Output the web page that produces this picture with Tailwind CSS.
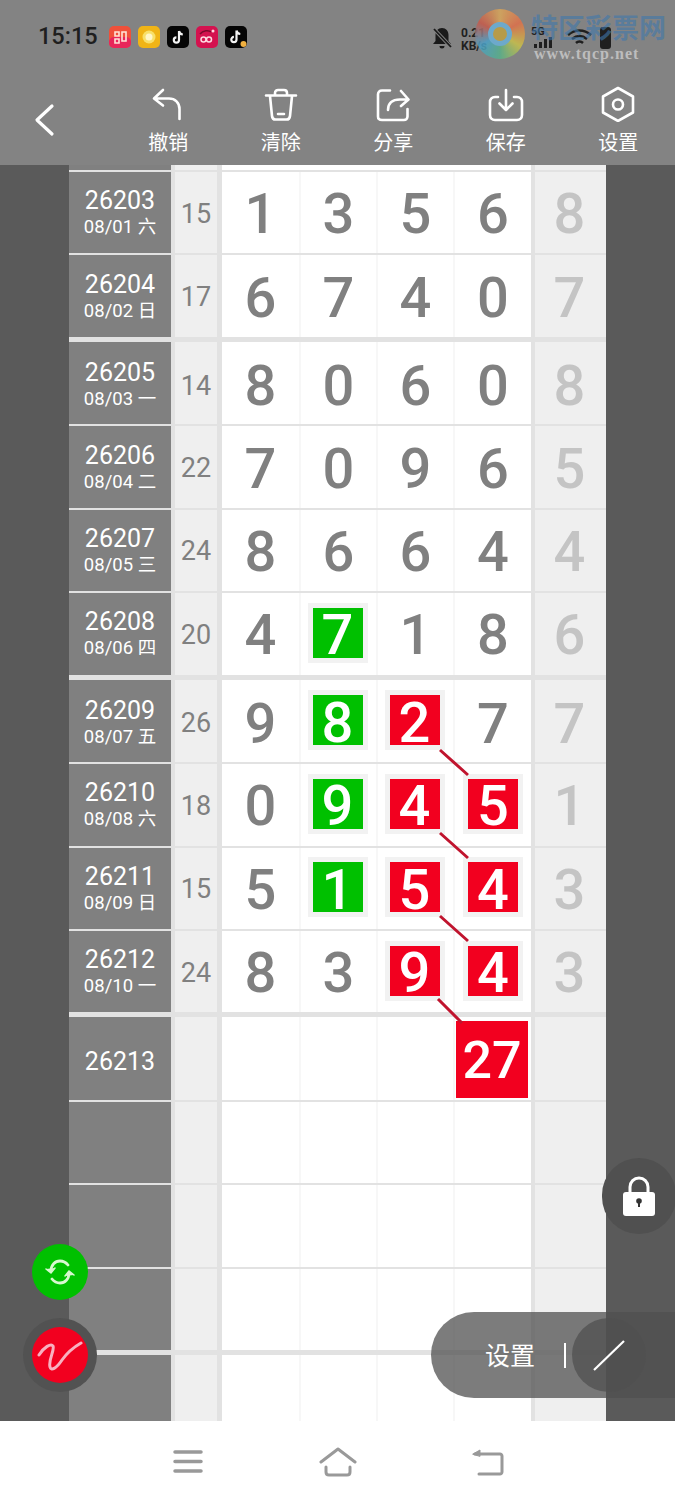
<!DOCTYPE html>
<html lang="zh">
<head>
<meta charset="utf-8">
<script src="https://cdn.jsdelivr.net/npm/@tailwindcss/browser@4"></script>
</head>
<body class="font-['Roboto','Noto_Sans_CJK_SC',sans-serif]">
<div class="relative w-[675px] h-[1500px] overflow-hidden bg-white flex flex-col">

<!-- Header -->
<header class="h-[165px] bg-[#838383] flex flex-col shrink-0 relative">
  <div class="h-[75px] pl-[38px] flex items-center gap-[10px] pb-[1px]">
    <span class="text-[23.500px] font-medium text-[#1f1f1f] w-[61px] leading-none">15:15</span>
    <div class="flex gap-[7px]">
      <svg class="w-[22px] h-[22px]" viewBox="0 0 22 22"><rect width="22" height="22" rx="5" fill="#f0503a"/><rect y="11" width="22" height="11" rx="5" fill="#e8265a"/><path d="M6 6h4v4H6zM13 6h4v9h-4zM6 13h4v4H6z" fill="none" stroke="#ffe3d6" stroke-width="1.6"/></svg>
      <svg class="w-[22px] h-[22px]" viewBox="0 0 22 22"><rect width="22" height="22" rx="5" fill="#f0b416"/><circle cx="11" cy="11" r="6.5" fill="#f8e06a"/><circle cx="11" cy="11" r="3.5" fill="#fff6c8"/></svg>
      <svg class="w-[22px] h-[22px]" viewBox="0 0 22 22"><rect width="22" height="22" rx="5" fill="#050505"/><path d="M12 5v9a2.6 2.6 0 1 1-2.6-2.6M12 5c.3 2 1.7 3.3 3.8 3.5" fill="none" stroke="#f4f4f4" stroke-width="2.2"/></svg>
      <svg class="w-[22px] h-[22px]" viewBox="0 0 22 22"><rect width="22" height="22" rx="5" fill="#d4124f"/><circle cx="7.5" cy="13.5" r="2.5" fill="none" stroke="#ffd8e0" stroke-width="1.5"/><circle cx="13" cy="13.5" r="2.5" fill="none" stroke="#ffd8e0" stroke-width="1.5"/><path d="M4 8c3-4 9-4 11-2" fill="none" stroke="#7a0a2c" stroke-width="1.5"/><circle cx="17" cy="5" r="1.5" fill="#ffd8e0"/></svg>
      <svg class="w-[22px] h-[22px]" viewBox="0 0 22 22"><rect width="22" height="22" rx="5" fill="#050505"/><path d="M11.5 4.5v9a2.6 2.6 0 1 1-2.6-2.6M11.5 4.5c.3 2 1.7 3.3 3.8 3.5" fill="none" stroke="#f4f4f4" stroke-width="2.2"/><circle cx="18.5" cy="18" r="3" fill="#f0b040"/></svg>
    </div>
  </div>
  <!-- Status right + watermark -->
  <svg class="absolute left-[431px] top-[26px] w-[22px] h-[24px]" viewBox="0 0 22 24"><path d="M11 2c4 0 6.500 3 6.500 7v6l2.500 3H2l2.500-3V9C4.500 5 7 2 11 2zM8.500 20h5a2.500 2.500 0 0 1-5 0z" fill="#1a1a1a"/><path d="M2 2l18 19" stroke="#838383" stroke-width="3.500"/><path d="M3 3l17 18" stroke="#1a1a1a" stroke-width="1.800"/></svg>
  <div class="absolute left-[461px] top-[27px] text-[12px] leading-[13px] font-bold text-[#1f1f1f]">0.21<br>KB/s</div>
  <div class="absolute left-[531px] top-[27px] w-[15px] text-[11px] leading-[10px] font-bold text-[#1f1f1f]">5G</div>
  <div class="absolute left-[534px] top-[37px] flex items-end gap-[2px] h-[11px]">
    <div class="w-[3px] h-[4px] bg-[#1f1f1f]"></div><div class="w-[3px] h-[6px] bg-[#1f1f1f]"></div><div class="w-[3px] h-[9px] bg-[#1f1f1f]"></div><div class="w-[3px] h-[11px] bg-[#1f1f1f]"></div>
  </div>
  <svg class="absolute left-[566px] top-[28px] w-[27px] h-[20px]" viewBox="0 0 27 20" fill="none" stroke="#1f1f1f" stroke-width="2.500"><path d="M2 7c7-6 16-6 23 0M6 11c5-4 10-4 15 0M10 15c2-2 5-2 7 0"/></svg>
  <div class="absolute left-[600px] top-[27px] w-[11px] h-[22px] rounded-[3px] bg-[#1f1f1f]"></div>
  <div class="absolute left-[475px] top-[9px] w-[50px] h-[50px] rounded-full bg-[conic-gradient(#d9a85a,#e0704a,#c9c04a,#58b08a,#4aa0c8,#c85a4a,#d9a85a)] opacity-85 flex items-center justify-center">
    <div class="w-[24px] h-[24px] rounded-full border-[5px] border-[#6ab0d8] bg-[#c0a040]"></div>
  </div>
  <div class="absolute left-[531px] top-[14px] text-[27px] leading-[30px] font-bold text-[#3f78ad]/60">特区彩票网</div>
  <div class="absolute left-[534px] top-[45px] text-[16px] leading-[18px] tracking-[1px] font-bold font-['Liberation_Serif',serif] text-[#bdbdbd]">www.tqcp.net</div>

  <!-- Toolbar -->
  <div class="relative flex-1 flex text-white text-[20px] leading-none">
    <svg class="absolute left-[32px] top-[28px] w-[24px] h-[34px]" viewBox="0 0 24 34" fill="none" stroke="#fff" stroke-width="3.200" stroke-linecap="round" stroke-linejoin="round"><path d="M20 3L5 17l15 14"/></svg>
    <div class="ml-[112px] w-[112.500px] flex flex-col items-center pt-[13px]">
      <svg class="w-[34px] h-[34px]" viewBox="0 0 34 34" fill="none" stroke="#fff" stroke-width="2.600" stroke-linecap="round" stroke-linejoin="round"><path d="M12 2L3 10.500l9 7M3 10.500h15c6 0 10.500 4 10.500 10.500V31"/></svg>
      <span class="mt-[11px]">撤销</span>
    </div>
    <div class="w-[112.500px] flex flex-col items-center pt-[13px]">
      <svg class="w-[34px] h-[34px]" viewBox="0 0 34 34" fill="none" stroke="#fff" stroke-width="2.600" stroke-linecap="round" stroke-linejoin="round"><path d="M2 7.500h30M11 7V5c0-2 1.500-3 3-3h6c1.500 0 3 1 3 3v2M6 8l2 20c.2 2 1.500 3.500 3.500 3.500h11c2 0 3.300-1.500 3.500-3.500l2-20M14 26h6"/></svg>
      <span class="mt-[11px]">清除</span>
    </div>
    <div class="w-[112.500px] flex flex-col items-center pt-[13px]">
      <svg class="w-[34px] h-[34px]" viewBox="0 0 34 34" fill="none" stroke="#fff" stroke-width="2.600" stroke-linecap="round" stroke-linejoin="round"><path d="M14 2.500H6C3.500 2.500 2 4 2 6.500v22C2 30.500 3.500 32 6 32h22c2 0 3.500-1.500 3.500-3.500V21M12 22c0-7 4-10.500 12-10.500h8M25 3l7.500 8.500L25 18"/></svg>
      <span class="mt-[11px]">分享</span>
    </div>
    <div class="w-[112.500px] flex flex-col items-center pt-[13px]">
      <svg class="w-[36px] h-[34px]" viewBox="0 0 36 34" fill="none" stroke="#fff" stroke-width="2.600" stroke-linecap="round" stroke-linejoin="round"><path d="M10 9H7c-3 0-5 2-5 5v13c0 3 2 5 5 5h22c3 0 5-2 5-5V14c0-3-2-5-5-5h-3M18 2v20M11.500 15.500L18 22l6.500-6.500"/></svg>
      <span class="mt-[11px]">保存</span>
    </div>
    <div class="w-[112.500px] flex flex-col items-center pt-[11px]">
      <svg class="w-[34px] h-[36px]" viewBox="0 0 34 36" fill="none" stroke="#fff" stroke-width="2.600" stroke-linejoin="round"><path d="M17 2l15 8.500v16L17 35 2 26.500v-16z"/><circle cx="17" cy="18.500" r="5"/></svg>
      <span class="mt-[11px]">设置</span>
    </div>
  </div>
</header>

<!-- Table -->
<main class="relative flex-1 bg-[#5a5a5a] overflow-hidden px-[69px]">
  <div class="w-[537px] text-[#808080]">
    <!-- sliver -->
    <div class="h-[7px] border-b-2 border-[#e2e2e2] bg-[#e2e2e2] grid grid-cols-[102px_4px_42px_5px_309px_4px_71px]">
      <div class="bg-[#808080]"></div><div></div><div class="bg-[#efefef]"></div><div></div><div class="bg-white"></div><div></div><div class="bg-[#efefef]"></div>
    </div>

    <!-- Rows -->
    <div class="h-[83.400px] border-b-2 border-[#e2e2e2] bg-[#e2e2e2] grid grid-cols-[102px_4px_42px_5px_79px_77px_77px_76px_4px_71px] items-stretch [&>div]:pt-[3px]">
      <div class="bg-[#808080] text-white flex flex-col items-center justify-center"><span class="text-[25px] leading-[27px]">26203</span><span class="text-[18.500px] leading-[27px]">08/01 六</span></div><div></div>
      <div class="bg-[#efefef] flex items-center justify-center text-[27px] leading-none">15</div><div></div>
      <div class="bg-white border-r-2 border-[#f7f7f7] flex items-center justify-center text-[56px] leading-none font-medium">1</div>
      <div class="bg-white border-r-2 border-[#f7f7f7] flex items-center justify-center text-[56px] leading-none font-medium">3</div>
      <div class="bg-white border-r-2 border-[#f7f7f7] flex items-center justify-center text-[56px] leading-none font-medium">5</div>
      <div class="bg-white flex items-center justify-center text-[56px] leading-none font-medium">6</div><div></div>
      <div class="bg-[#efefef] flex items-center justify-center text-[56px] leading-none font-medium text-[#c4c4c4] pr-[2px]">8</div>
    </div>
    <div class="h-[86.400px] border-b-[5px] border-[#e2e2e2] bg-[#e2e2e2] grid grid-cols-[102px_4px_42px_5px_79px_77px_77px_76px_4px_71px] items-stretch [&>div]:pt-[3px]">
      <div class="bg-[#808080] text-white flex flex-col items-center justify-center"><span class="text-[25px] leading-[27px]">26204</span><span class="text-[18.500px] leading-[27px]">08/02 日</span></div><div></div>
      <div class="bg-[#efefef] flex items-center justify-center text-[27px] leading-none">17</div><div></div>
      <div class="bg-white border-r-2 border-[#f7f7f7] flex items-center justify-center text-[56px] leading-none font-medium">6</div>
      <div class="bg-white border-r-2 border-[#f7f7f7] flex items-center justify-center text-[56px] leading-none font-medium">7</div>
      <div class="bg-white border-r-2 border-[#f7f7f7] flex items-center justify-center text-[56px] leading-none font-medium">4</div>
      <div class="bg-white flex items-center justify-center text-[56px] leading-none font-medium">0</div><div></div>
      <div class="bg-[#efefef] flex items-center justify-center text-[56px] leading-none font-medium text-[#c4c4c4] pr-[2px]">7</div>
    </div>
    <div class="h-[84.600px] border-b-2 border-[#e2e2e2] bg-[#e2e2e2] grid grid-cols-[102px_4px_42px_5px_79px_77px_77px_76px_4px_71px] items-stretch [&>div]:pt-[6px]">
      <div class="bg-[#808080] text-white flex flex-col items-center justify-center"><span class="text-[25px] leading-[27px]">26205</span><span class="text-[18.500px] leading-[27px]">08/03 一</span></div><div></div>
      <div class="bg-[#efefef] flex items-center justify-center text-[27px] leading-none">14</div><div></div>
      <div class="bg-white border-r-2 border-[#f7f7f7] flex items-center justify-center text-[56px] leading-none font-medium">8</div>
      <div class="bg-white border-r-2 border-[#f7f7f7] flex items-center justify-center text-[56px] leading-none font-medium">0</div>
      <div class="bg-white border-r-2 border-[#f7f7f7] flex items-center justify-center text-[56px] leading-none font-medium">6</div>
      <div class="bg-white flex items-center justify-center text-[56px] leading-none font-medium">0</div><div></div>
      <div class="bg-[#efefef] flex items-center justify-center text-[56px] leading-none font-medium text-[#c4c4c4] pr-[2px]">8</div>
    </div>
    <div class="h-[83.400px] border-b-2 border-[#e2e2e2] bg-[#e2e2e2] grid grid-cols-[102px_4px_42px_5px_79px_77px_77px_76px_4px_71px] items-stretch [&>div]:pt-[3px]">
      <div class="bg-[#808080] text-white flex flex-col items-center justify-center"><span class="text-[25px] leading-[27px]">26206</span><span class="text-[18.500px] leading-[27px]">08/04 二</span></div><div></div>
      <div class="bg-[#efefef] flex items-center justify-center text-[27px] leading-none">22</div><div></div>
      <div class="bg-white border-r-2 border-[#f7f7f7] flex items-center justify-center text-[56px] leading-none font-medium">7</div>
      <div class="bg-white border-r-2 border-[#f7f7f7] flex items-center justify-center text-[56px] leading-none font-medium">0</div>
      <div class="bg-white border-r-2 border-[#f7f7f7] flex items-center justify-center text-[56px] leading-none font-medium">9</div>
      <div class="bg-white flex items-center justify-center text-[56px] leading-none font-medium">6</div><div></div>
      <div class="bg-[#efefef] flex items-center justify-center text-[56px] leading-none font-medium text-[#c4c4c4] pr-[2px]">5</div>
    </div>
    <div class="h-[83.400px] border-b-2 border-[#e2e2e2] bg-[#e2e2e2] grid grid-cols-[102px_4px_42px_5px_79px_77px_77px_76px_4px_71px] items-stretch [&>div]:pt-[3px]">
      <div class="bg-[#808080] text-white flex flex-col items-center justify-center"><span class="text-[25px] leading-[27px]">26207</span><span class="text-[18.500px] leading-[27px]">08/05 三</span></div><div></div>
      <div class="bg-[#efefef] flex items-center justify-center text-[27px] leading-none">24</div><div></div>
      <div class="bg-white border-r-2 border-[#f7f7f7] flex items-center justify-center text-[56px] leading-none font-medium">8</div>
      <div class="bg-white border-r-2 border-[#f7f7f7] flex items-center justify-center text-[56px] leading-none font-medium">6</div>
      <div class="bg-white border-r-2 border-[#f7f7f7] flex items-center justify-center text-[56px] leading-none font-medium">6</div>
      <div class="bg-white flex items-center justify-center text-[56px] leading-none font-medium">4</div><div></div>
      <div class="bg-[#efefef] flex items-center justify-center text-[56px] leading-none font-medium text-[#c4c4c4] pr-[2px]">4</div>
    </div>
    <div class="h-[86.400px] border-b-[5px] border-[#e2e2e2] bg-[#e2e2e2] grid grid-cols-[102px_4px_42px_5px_79px_77px_77px_76px_4px_71px] items-stretch [&>div]:pt-[3px]">
      <div class="bg-[#808080] text-white flex flex-col items-center justify-center"><span class="text-[25px] leading-[27px]">26208</span><span class="text-[18.500px] leading-[27px]">08/06 四</span></div><div></div>
      <div class="bg-[#efefef] flex items-center justify-center text-[27px] leading-none">20</div><div></div>
      <div class="bg-white border-r-2 border-[#f7f7f7] flex items-center justify-center text-[56px] leading-none font-medium">4</div>
      <div class="bg-white border-r-2 border-[#f7f7f7] flex items-center justify-center pr-[2px]"><div class="w-[50px] h-[50px] -mt-[5px] pt-[5px] ring-[5px] ring-[#f2f2f2] bg-[#00c000] text-white text-[56px] leading-none font-medium flex items-center justify-center">7</div></div>
      <div class="bg-white border-r-2 border-[#f7f7f7] flex items-center justify-center text-[56px] leading-none font-medium">1</div>
      <div class="bg-white flex items-center justify-center text-[56px] leading-none font-medium">8</div><div></div>
      <div class="bg-[#efefef] flex items-center justify-center text-[56px] leading-none font-medium text-[#c4c4c4] pr-[2px]">6</div>
    </div>
    <div class="h-[84.600px] border-b-2 border-[#e2e2e2] bg-[#e2e2e2] grid grid-cols-[102px_4px_42px_5px_79px_77px_77px_76px_4px_71px] items-stretch [&>div]:pt-[6px]">
      <div class="bg-[#808080] text-white flex flex-col items-center justify-center"><span class="text-[25px] leading-[27px]">26209</span><span class="text-[18.500px] leading-[27px]">08/07 五</span></div><div></div>
      <div class="bg-[#efefef] flex items-center justify-center text-[27px] leading-none">26</div><div></div>
      <div class="bg-white border-r-2 border-[#f7f7f7] flex items-center justify-center text-[56px] leading-none font-medium">9</div>
      <div class="bg-white border-r-2 border-[#f7f7f7] flex items-center justify-center pr-[2px]"><div class="w-[50px] h-[50px] -mt-[7px] pt-[5px] ring-[5px] ring-[#f2f2f2] bg-[#00c000] text-white text-[56px] leading-none font-medium flex items-center justify-center">8</div></div>
      <div class="bg-white border-r-2 border-[#f7f7f7] flex items-center justify-center pr-[2px]"><div class="w-[50px] h-[50px] -mt-[7px] pt-[5px] ring-[5px] ring-[#f2f2f2] bg-[#f2001f] text-white text-[56px] leading-none font-medium flex items-center justify-center">2</div></div>
      <div class="bg-white flex items-center justify-center text-[56px] leading-none font-medium">7</div><div></div>
      <div class="bg-[#efefef] flex items-center justify-center text-[56px] leading-none font-medium text-[#c4c4c4] pr-[2px]">7</div>
    </div>
    <div class="h-[83.400px] border-b-2 border-[#e2e2e2] bg-[#e2e2e2] grid grid-cols-[102px_4px_42px_5px_79px_77px_77px_76px_4px_71px] items-stretch [&>div]:pt-[3px]">
      <div class="bg-[#808080] text-white flex flex-col items-center justify-center"><span class="text-[25px] leading-[27px]">26210</span><span class="text-[18.500px] leading-[27px]">08/08 六</span></div><div></div>
      <div class="bg-[#efefef] flex items-center justify-center text-[27px] leading-none">18</div><div></div>
      <div class="bg-white border-r-2 border-[#f7f7f7] flex items-center justify-center text-[56px] leading-none font-medium">0</div>
      <div class="bg-white border-r-2 border-[#f7f7f7] flex items-center justify-center pr-[2px]"><div class="w-[50px] h-[50px] -mt-[5px] pt-[5px] ring-[5px] ring-[#f2f2f2] bg-[#00c000] text-white text-[56px] leading-none font-medium flex items-center justify-center">9</div></div>
      <div class="bg-white border-r-2 border-[#f7f7f7] flex items-center justify-center pr-[2px]"><div class="w-[50px] h-[50px] -mt-[5px] pt-[5px] ring-[5px] ring-[#f2f2f2] bg-[#f2001f] text-white text-[56px] leading-none font-medium flex items-center justify-center">4</div></div>
      <div class="bg-white flex items-center justify-center"><div class="w-[50px] h-[50px] -mt-[5px] pt-[5px] ring-[5px] ring-[#f2f2f2] bg-[#f2001f] text-white text-[56px] leading-none font-medium flex items-center justify-center">5</div></div><div></div>
      <div class="bg-[#efefef] flex items-center justify-center text-[56px] leading-none font-medium text-[#c4c4c4] pr-[2px]">1</div>
    </div>
    <div class="h-[83.400px] border-b-2 border-[#e2e2e2] bg-[#e2e2e2] grid grid-cols-[102px_4px_42px_5px_79px_77px_77px_76px_4px_71px] items-stretch [&>div]:pt-[3px]">
      <div class="bg-[#808080] text-white flex flex-col items-center justify-center"><span class="text-[25px] leading-[27px]">26211</span><span class="text-[18.500px] leading-[27px]">08/09 日</span></div><div></div>
      <div class="bg-[#efefef] flex items-center justify-center text-[27px] leading-none">15</div><div></div>
      <div class="bg-white border-r-2 border-[#f7f7f7] flex items-center justify-center text-[56px] leading-none font-medium">5</div>
      <div class="bg-white border-r-2 border-[#f7f7f7] flex items-center justify-center pr-[2px]"><div class="w-[50px] h-[50px] -mt-[5px] pt-[5px] ring-[5px] ring-[#f2f2f2] bg-[#00c000] text-white text-[56px] leading-none font-medium flex items-center justify-center">1</div></div>
      <div class="bg-white border-r-2 border-[#f7f7f7] flex items-center justify-center pr-[2px]"><div class="w-[50px] h-[50px] -mt-[5px] pt-[5px] ring-[5px] ring-[#f2f2f2] bg-[#f2001f] text-white text-[56px] leading-none font-medium flex items-center justify-center">5</div></div>
      <div class="bg-white flex items-center justify-center"><div class="w-[50px] h-[50px] -mt-[5px] pt-[5px] ring-[5px] ring-[#f2f2f2] bg-[#f2001f] text-white text-[56px] leading-none font-medium flex items-center justify-center">4</div></div><div></div>
      <div class="bg-[#efefef] flex items-center justify-center text-[56px] leading-none font-medium text-[#c4c4c4] pr-[2px]">3</div>
    </div>
    <div class="h-[86.400px] border-b-[5px] border-[#e2e2e2] bg-[#e2e2e2] grid grid-cols-[102px_4px_42px_5px_79px_77px_77px_76px_4px_71px] items-stretch [&>div]:pt-[3px]">
      <div class="bg-[#808080] text-white flex flex-col items-center justify-center"><span class="text-[25px] leading-[27px]">26212</span><span class="text-[18.500px] leading-[27px]">08/10 一</span></div><div></div>
      <div class="bg-[#efefef] flex items-center justify-center text-[27px] leading-none">24</div><div></div>
      <div class="bg-white border-r-2 border-[#f7f7f7] flex items-center justify-center text-[56px] leading-none font-medium">8</div>
      <div class="bg-white border-r-2 border-[#f7f7f7] flex items-center justify-center text-[56px] leading-none font-medium">3</div>
      <div class="bg-white border-r-2 border-[#f7f7f7] flex items-center justify-center pr-[2px]"><div class="w-[50px] h-[50px] -mt-[5px] pt-[5px] ring-[5px] ring-[#f2f2f2] bg-[#f2001f] text-white text-[56px] leading-none font-medium flex items-center justify-center">9</div></div>
      <div class="bg-white flex items-center justify-center"><div class="w-[50px] h-[50px] -mt-[5px] pt-[5px] ring-[5px] ring-[#f2f2f2] bg-[#f2001f] text-white text-[56px] leading-none font-medium flex items-center justify-center">4</div></div><div></div>
      <div class="bg-[#efefef] flex items-center justify-center text-[56px] leading-none font-medium text-[#c4c4c4] pr-[2px]">3</div>
    </div>
    <div class="h-[84.600px] border-b-2 border-[#e2e2e2] bg-[#e2e2e2] grid grid-cols-[102px_4px_42px_5px_79px_77px_77px_76px_4px_71px] items-stretch [&>div]:pt-[5px]">
      <div class="bg-[#808080] text-white flex items-center justify-center text-[25px] leading-none">26213</div><div></div>
      <div class="bg-[#efefef]"></div><div></div>
      <div class="bg-white border-r-2 border-[#f7f7f7]"></div><div class="bg-white border-r-2 border-[#f7f7f7]"></div><div class="bg-white border-r-2 border-[#f7f7f7]"></div>
      <div class="bg-white flex items-center justify-center pr-[2px]"><div class="w-[72px] h-[77px] -mt-[4px] pt-[3px] bg-[#f2001f] text-white text-[52px] leading-none font-medium flex items-center justify-center">27</div></div><div></div>
      <div class="bg-[#efefef]"></div>
    </div>
    <div class="h-[83.400px] border-b-2 border-[#e2e2e2] bg-[#e2e2e2] grid grid-cols-[102px_4px_42px_5px_79px_77px_77px_76px_4px_71px] items-stretch">
      <div class="bg-[#808080]"></div><div></div><div class="bg-[#efefef]"></div><div></div>
      <div class="bg-white border-r-2 border-[#f7f7f7]"></div><div class="bg-white border-r-2 border-[#f7f7f7]"></div><div class="bg-white border-r-2 border-[#f7f7f7]"></div><div class="bg-white"></div><div></div><div class="bg-[#efefef]"></div>
    </div>
    <div class="h-[83.400px] border-b-2 border-[#e2e2e2] bg-[#e2e2e2] grid grid-cols-[102px_4px_42px_5px_79px_77px_77px_76px_4px_71px] items-stretch">
      <div class="bg-[#808080]"></div><div></div><div class="bg-[#efefef]"></div><div></div>
      <div class="bg-white border-r-2 border-[#f7f7f7]"></div><div class="bg-white border-r-2 border-[#f7f7f7]"></div><div class="bg-white border-r-2 border-[#f7f7f7]"></div><div class="bg-white"></div><div></div><div class="bg-[#efefef]"></div>
    </div>
    <div class="h-[86.400px] border-b-[5px] border-[#e2e2e2] bg-[#e2e2e2] grid grid-cols-[102px_4px_42px_5px_79px_77px_77px_76px_4px_71px] items-stretch">
      <div class="bg-[#808080]"></div><div></div><div class="bg-[#efefef]"></div><div></div>
      <div class="bg-white border-r-2 border-[#f7f7f7]"></div><div class="bg-white border-r-2 border-[#f7f7f7]"></div><div class="bg-white border-r-2 border-[#f7f7f7]"></div><div class="bg-white"></div><div></div><div class="bg-[#efefef]"></div>
    </div>
    <div class="h-[90px] bg-[#e2e2e2] grid grid-cols-[102px_4px_42px_5px_79px_77px_77px_76px_4px_71px] items-stretch">
      <div class="bg-[#808080]"></div><div></div><div class="bg-[#efefef]"></div><div></div>
      <div class="bg-white border-r-2 border-[#f7f7f7]"></div><div class="bg-white border-r-2 border-[#f7f7f7]"></div><div class="bg-white border-r-2 border-[#f7f7f7]"></div><div class="bg-white"></div><div></div><div class="bg-[#efefef]"></div>
    </div>
  </div>

  <!-- Connecting lines over the grid (main origin y=165) -->
  <svg class="absolute left-0 top-0 w-[675px] h-[900px] pointer-events-none" viewBox="0 0 675 900" fill="none" stroke="#c0142e" stroke-width="3">
    <path d="M440 585l28 25M440 668l28 25M440 751l28 25M438 834l24 24"/>
  </svg>

  <!-- Floating buttons -->
  <div class="absolute left-[32px] top-[1079px] w-[56px] h-[56px] rounded-full bg-[#00c000] flex items-center justify-center">
    <svg class="w-[32px] h-[30px]" viewBox="0 0 32 30" fill="none" stroke="#d8f8d0" stroke-width="2.800" stroke-linecap="round"><path d="M7 14c0-6 4-10 9-10 3 0 6 1.500 8 4M25 16c0 6-4 10-9 10-3 0-6-1.500-8-4"/><path d="M2 12l5 4 4-5M30 18l-5-4-4 5" fill="#d8f8d0" stroke-width="1.500"/></svg>
  </div>
  <div class="absolute left-[23px] top-[1153px] w-[74px] h-[74px] rounded-full bg-[#525252] flex items-center justify-center">
    <div class="w-[56px] h-[56px] rounded-full bg-[#f2001f] flex items-center justify-center">
      <svg class="w-[46px] h-[36px]" viewBox="0 0 46 36" fill="none" stroke="#f8b0c0" stroke-width="3" stroke-linecap="round"><path d="M2 18C7 10 14 6 16 9c2 4-5 14-3 21 1 4 6 2 12-7 5-7 12-13 19-17"/></svg>
    </div>
  </div>
  <div class="absolute left-[602px] top-[993px] w-[74px] h-[76px] rounded-full bg-[#505050] flex items-center justify-center">
    <svg class="w-[34px] h-[40px]" viewBox="0 0 34 40"><path d="M8 17v-6c0-5 4-9 9-9s9 4 9 9v6" fill="none" stroke="#fff" stroke-width="3"/><rect x="1" y="16" width="32" height="24" rx="3" fill="#fff"/><circle cx="17" cy="25" r="2.800" fill="#333"/><path d="M16 26h2v5h-2z" fill="#333"/></svg>
  </div>
  <div class="absolute left-[431px] top-[1147px] w-[244px] h-[86px] rounded-l-[43px] bg-[#505050]/75 flex items-center text-white text-[25px]">
    <span class="ml-[54px] pt-[3px]">设置</span>
    <div class="ml-[29px] w-[2px] h-[25px] bg-white"></div>
    <div class="ml-[6px] w-[74px] h-[74px] rounded-full bg-[#505050]/75 flex items-center justify-center">
      <svg class="w-[32px] h-[32px]" viewBox="0 0 32 32"><path d="M1 31L31 2" stroke="#fff" stroke-width="2.200"/></svg>
    </div>
  </div>
</main>

<!-- Nav bar -->
<nav class="h-[79px] bg-white shrink-0 relative flex items-center">
  <svg class="absolute left-[173px] top-[28px] w-[30px] h-[25px]" viewBox="0 0 30 25" fill="none" stroke="#999" stroke-width="3.500" stroke-linecap="round"><path d="M2 3h26M2 12.500h26M2 22h26"/></svg>
  <svg class="absolute left-[319px] top-[26px] w-[38px] h-[30px]" viewBox="0 0 38 30" fill="none" stroke="#999" stroke-width="3" stroke-linecap="round" stroke-linejoin="round"><path d="M2 15L19 2l17 13M7 20v5c0 2 1 3 3 3h18c2 0 3-1 3-3v-5"/></svg>
  <svg class="absolute left-[471px] top-[27px] w-[34px] h-[28px]" viewBox="0 0 34 28" fill="none" stroke="#999" stroke-width="3" stroke-linecap="round" stroke-linejoin="round"><path d="M4 6h25c1 0 2 1 2 2v16c0 1-1 2-2 2H8"/><path d="M2 6l7-4v6z" fill="#999" stroke-width="1"/></svg>
</nav>
</div>
</body>
</html>
